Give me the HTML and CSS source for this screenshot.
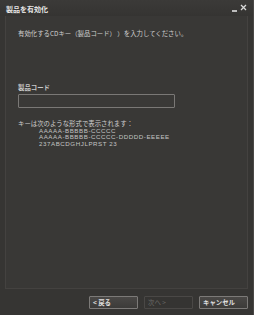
FILE: index.html
```html
<!DOCTYPE html>
<html lang="ja">
<head>
<meta charset="utf-8">
<link rel="stylesheet" href="styles.css">
</head>
<body>
<div class="window">
  <div class="titlebar">
    <span class="title">製品を有効化</span>
    <div class="controls">
      <span class="min"></span>
      <svg class="close" width="7" height="7" viewBox="0 0 7 7"><path d="M1 1L6 6M6 1L1 6" stroke="#d8d8d8" stroke-width="1.3"/></svg>
    </div>
  </div>
  <div class="panel">
    <p class="intro">有効化するCDキー（製品コード） ）を入力してください。</p>
    <label class="label">製品コード</label>
    <div class="input"></div>
    <p class="hint">キーは次のような形式で表示されます：</p>
    <div class="formats">
      <div>AAAAA-BBBBB-CCCCC</div>
      <div>AAAAA-BBBBB-CCCCC-DDDDD-EEEEE</div>
      <div>237ABCDGHJLPRST 23</div>
    </div>
  </div>
  <div class="footer">
    <button class="btn">&lt; 戻る</button>
    <button class="btn disabled">次へ &gt;</button>
    <button class="btn">キャンセル</button>
  </div>
</div>
</body>
</html>
```
FILE: styles.css
```css
html, body {
  margin: 0;
  padding: 0;
  background: #2e2d2c;
}
.window {
  width: 254px;
  height: 315px;
  box-sizing: border-box;
  background: #363533;
  border-right: 1px solid #4a4846;
  display: flex;
  flex-direction: column;
  font-family: "Noto Sans CJK JP", "Liberation Sans", sans-serif;
  color: #cfcfcf;
}
.titlebar {
  height: 16px;
  display: flex;
  align-items: center;
  justify-content: space-between;
  padding: 0 6px;
  background: linear-gradient(#3b3a38, #353432);
}
.title {
  font-size: 7px;
  font-weight: bold;
  color: #e6e6e6;
  margin-top: 1px;
}
.controls {
  display: flex;
  align-items: center;
  gap: 3px;
}
.min {
  width: 5px;
  height: 2px;
  background: #bdbdbd;
  margin-top: 5px;
}
.close {
  display: block;
  margin-top: -2px;
}
.panel {
  margin: 0 5px;
  height: 273px;
  box-sizing: border-box;
  background: #393836;
  border: 1px solid #444240;
  border-top: none;
  padding: 0 0 0 12px;
}
.intro {
  margin: 14px 0 0;
  font-size: 6.4px;
  line-height: 8px;
  color: #cfcfcf;
}
.label {
  display: block;
  margin-top: 46px;
  font-size: 6.4px;
  font-weight: bold;
  line-height: 8px;
  color: #c8c8c8;
}
.input {
  margin-top: 2px;
  width: 157px;
  height: 14px;
  box-sizing: border-box;
  border: 1px solid #7a7876;
  background: #3a3937;
  border-radius: 1px;
}
.hint {
  margin: 12px 0 0;
  font-size: 6.4px;
  line-height: 7px;
}
.formats {
  margin-left: 21px;
  margin-top: 0.5px;
  font-size: 6.2px;
  line-height: 6.5px;
  letter-spacing: 0.55px;
  color: #c4c4c4;
  font-family: "Liberation Sans", sans-serif;
}
.footer {
  flex: 1;
  display: flex;
  justify-content: flex-end;
  align-items: flex-start;
  gap: 6px;
  padding: 7px 5px 0 0;
}
.btn {
  width: 49px;
  height: 13px;
  padding: 0 3px;
  box-sizing: border-box;
  text-align: left;
  font-family: "Noto Sans CJK JP", "Liberation Sans", sans-serif;
  font-size: 6.4px;
  font-weight: bold;
  color: #e0e0e0;
  background: linear-gradient(#4a4846, #3c3b39);
  border: 1px solid #7c7a78;
  border-radius: 1px;
  line-height: 10px;
}
.btn.disabled {
  color: #6e6c6a;
  font-weight: normal;
  background: #353432;
  border-color: #4a4846;
}
```
